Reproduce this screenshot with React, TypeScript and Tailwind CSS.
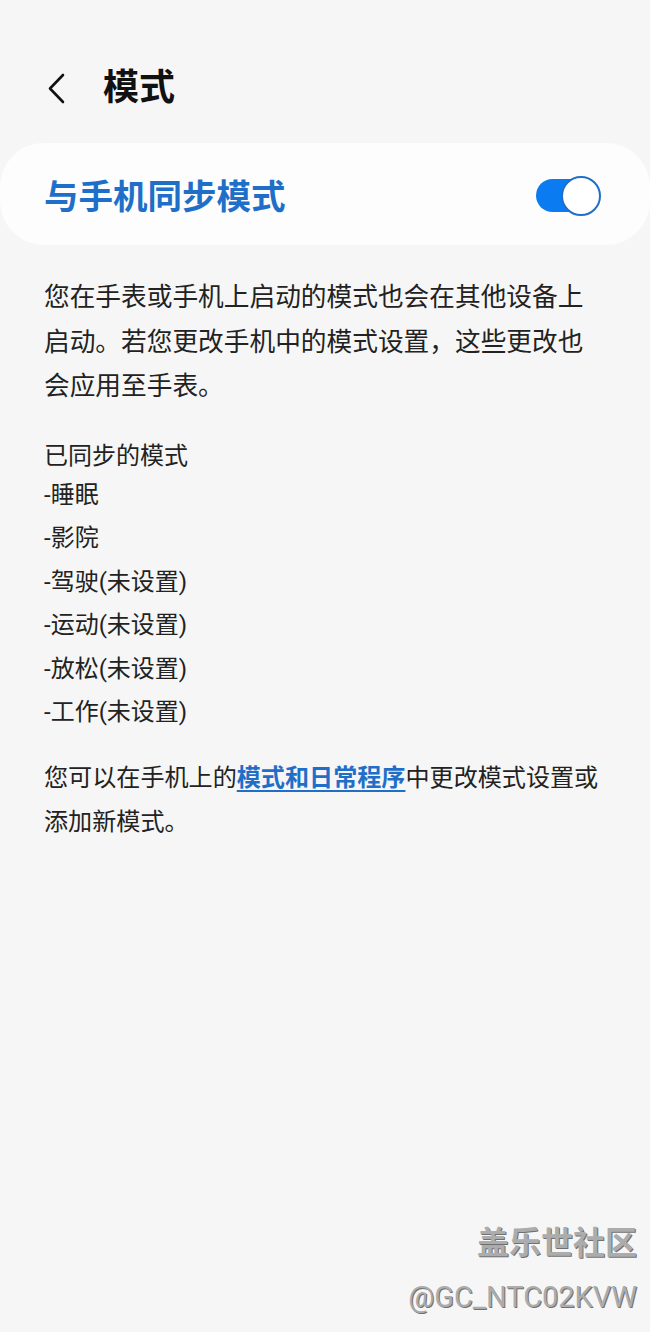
import React from "react";

const font = { fontFamily: '"Roboto", "Noto Sans CJK SC", sans-serif' };

const modes = ["-睡眠", "-影院", "-驾驶(未设置)", "-运动(未设置)", "-放松(未设置)", "-工作(未设置)"];

const Toggle = () => {
  return (
    <div className="relative w-[65px] h-[40px] flex items-center">
      <div className="w-[50px] h-[33px] rounded-full bg-[#0a7bf0]" />
      <div className="absolute right-0 top-0 w-[40px] h-[40px] rounded-full bg-white border-[2px] border-[#1f6fc8]" />
    </div>
  );
};

export default function App() {
  return (
    <div className="relative min-h-[1332px] bg-[#f6f6f6] text-[#222222]" style={font}>
      {/* header */}
      <div className="pt-[66px] h-[110px] flex items-center pl-[46px]">
        <svg className="w-[20px] h-[32px]" viewBox="0 0 20 32" fill="none">
          <path
            d="M17 3 L4 16.5 L17 30"
            stroke="#111"
            strokeWidth="2.6"
            strokeLinecap="round"
            strokeLinejoin="round"
          />
        </svg>
        <h1 className="ml-[37px] text-[36px] leading-[44px] font-bold text-[#111]">模式</h1>
      </div>

      {/* sync card */}
      <div className="mt-[33px] h-[102px] rounded-[44px] bg-[#fdfdfd] flex items-center justify-between pl-[44px] pr-[49px]">
        <span className="mt-[8px] text-[34.5px] font-bold text-[#1f6fc8]">与手机同步模式</span>
        <div className="mt-[3px]">
          <Toggle />
        </div>
      </div>

      <div className="px-[44px]">
        <p className="mt-[30px] text-[25.7px] leading-[44.5px]">
          您在手表或手机上启动的模式也会在其他设备上启动。若您更改手机中的模式设置，这些更改也会应用至手表。
        </p>

        <div className="mt-[29px] text-[24px]">
          <div className="leading-[36px]">已同步的模式</div>
          {modes.map((m) => (
            <div key={m} className="leading-[43.5px]">
              {m}
            </div>
          ))}
        </div>

        <p className="mt-[21px] text-[24.1px] leading-[44px]">
          您可以在手机上的
          <a href="#" className="font-bold text-[#1f6fc8] underline underline-offset-[4px] decoration-[2px]">
            模式和日常程序
          </a>
          中更改模式设置或添加新模式。
        </p>
      </div>

      {/* watermark */}
      <div className="absolute right-[13px] top-[1222px] flex flex-col items-end text-[#acacac]">
        <span className="text-[32px] leading-[42px] font-bold [text-shadow:1px_1px_0_#707070]">盖乐世社区</span>
        <span className="mt-[16px] text-[29px] leading-[34px] [text-shadow:1px_1px_0_#707070]">@GC_NTC02KVW</span>
      </div>
    </div>
  );
}
